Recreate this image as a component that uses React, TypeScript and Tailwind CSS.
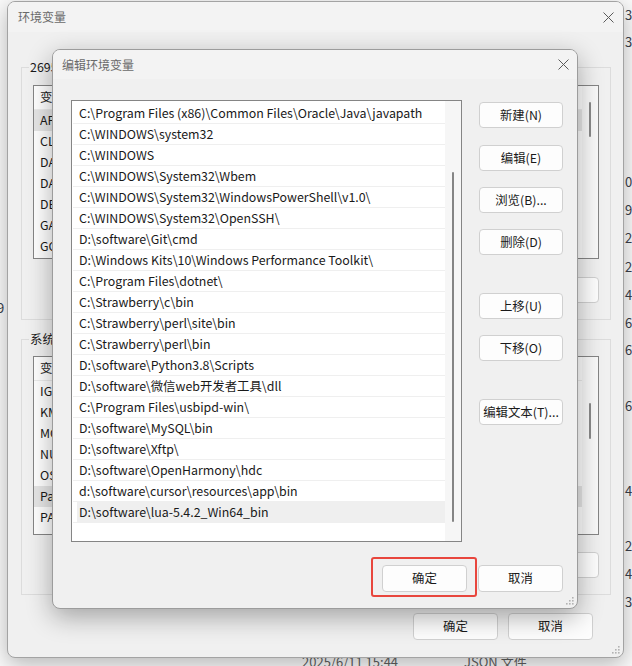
import React from "react";

const FONT = "font-['Noto_Sans_CJK_SC',sans-serif]";

const pathRows = [
  "C:\\Program Files (x86)\\Common Files\\Oracle\\Java\\javapath",
  "C:\\WINDOWS\\system32",
  "C:\\WINDOWS",
  "C:\\WINDOWS\\System32\\Wbem",
  "C:\\WINDOWS\\System32\\WindowsPowerShell\\v1.0\\",
  "C:\\WINDOWS\\System32\\OpenSSH\\",
  "D:\\software\\Git\\cmd",
  "D:\\Windows Kits\\10\\Windows Performance Toolkit\\",
  "C:\\Program Files\\dotnet\\",
  "C:\\Strawberry\\c\\bin",
  "C:\\Strawberry\\perl\\site\\bin",
  "C:\\Strawberry\\perl\\bin",
  "D:\\software\\Python3.8\\Scripts",
  "D:\\software\\微信web开发者工具\\dll",
  "C:\\Program Files\\usbipd-win\\",
  "D:\\software\\MySQL\\bin",
  "D:\\software\\Xftp\\",
  "D:\\software\\OpenHarmony\\hdc",
  "d:\\software\\cursor\\resources\\app\\bin",
  "D:\\software\\lua-5.4.2_Win64_bin",
];

const userVars = ["API_KEY", "CLASSPATH", "DASHSCOPE_API_KEY", "DATA_HOME", "DEEPSEEK_KEY", "GATEWAY", "GOPATH"];
const sysVars = ["IGCCSVC_DB", "KMP_DUPLICATE_LIB_OK", "MOZ_PLUGIN_PATH", "NUMBER_OF_PROCESSORS", "OS", "Path", "PATHEXT"];

// size column of the explorer window sitting behind everything
const sizeFragments: [number, string][] = [
  [6, "3,"], [33, "3,"], [173, "0,"], [201, "9,"], [229, "2,"], [258, "2,"], [286, "4,"],
  [314, "6,"], [341, "6,"], [397, "6,"], [482, "4,"], [537, "2,"], [565, "4,"], [593, "3,"],
];

function CloseIcon() {
  return (
    <svg width="11" height="11" viewBox="0 0 11 11" className="text-[#5a5a5a]">
      <path d="M0.5 0.5L10.5 10.5M10.5 0.5L0.5 10.5" stroke="currentColor" strokeWidth="1" />
    </svg>
  );
}

function Grip() {
  const dots = [[7, 1], [7, 4], [4, 4], [7, 7], [4, 7], [1, 7]];
  return (
    <svg width="10" height="10" viewBox="0 0 10 10" className="absolute right-[2px] bottom-[2px]">
      {dots.map(([x, y]) => (
        <rect key={`${x}-${y}`} x={x} y={y} width="1.6" height="1.6" fill="#b3b3b3" />
      ))}
    </svg>
  );
}

function Btn({ label, className = "" }: { label: string; className?: string }) {
  return (
    <button
      className={`flex h-[26px] w-[84px] items-center justify-center rounded-[4px] border border-[#d0d0d0] bg-[#fdfdfd] text-[12.4px] leading-none text-[#1a1a1a] ${className}`}
    >
      {label}
    </button>
  );
}

function VarList({
  rows,
  selected,
  className,
  thumbClass,
}: {
  rows: string[];
  selected: number;
  className: string;
  thumbClass: string;
}) {
  return (
    <div className={`flex border border-[#858585] bg-white ${className}`}>
      <div className="flex-1 overflow-hidden">
        <div className="flex h-[24px] items-center border-b border-[#ececec] pl-[6px] text-[12.4px] text-[#1a1a1a]">
          变量
        </div>
        {rows.map((r, i) => (
          <div
            key={r}
            className={`flex h-[21px] items-center pl-[6px] text-[12.4px] text-[#1a1a1a] ${
              i === selected ? "bg-[#e6e6e6]" : ""
            }`}
          >
            {r}
          </div>
        ))}
      </div>
      <div className="flex w-[16px] justify-center bg-[#f9f9f9]">
        <div className={`w-[2px] rounded-full bg-[#8a8a8a] ${thumbClass}`} />
      </div>
    </div>
  );
}

function Group({ legend, children, className = "" }: { legend: string; children: React.ReactNode; className?: string }) {
  return (
    <div className={`relative border border-[#dcdcdc] px-[11px] ${className}`}>
      <span className="absolute left-[7px] top-[-10px] bg-[#f0f0f0] px-[1px] text-[12.4px] leading-[18px] text-[#1a1a1a]">
        {legend}
      </span>
      {children}
    </div>
  );
}

function OuterWindow() {
  return (
    <div className="absolute left-[7px] top-[1px] flex h-[657px] w-[617px] flex-col overflow-hidden rounded-[8px] border border-[#a3a3a3] bg-[#f0f0f0] shadow-[0_6px_22px_rgba(0,0,0,0.28)]">
      <div className="flex h-[30px] items-center justify-between bg-[#f3f3f3] pl-[10px] pr-[9px]">
        <span className="text-[12px] text-[#6a6a6a]">环境变量</span>
        <CloseIcon />
      </div>
      <div className="flex flex-1 flex-col pl-[13px] pr-[12px]">
        <Group legend="26958的用户变量(U)" className="mt-[35px] pt-[17px] pb-[16px]">
          <VarList rows={userVars} selected={0} className="h-[174px]" thumbClass="mt-[16px] h-[35px]" />
          <div className="mt-[18px] flex justify-end gap-[10px]">
            <Btn label="新建(N)..." />
            <Btn label="编辑(E)..." />
            <Btn label="删除(D)" />
          </div>
        </Group>
        <Group legend="系统变量(S)" className="mt-[19px] pt-[16px] pb-[16px]">
          <VarList rows={sysVars} selected={5} className="h-[179px]" thumbClass="mt-[46px] h-[36px]" />
          <div className="mt-[17px] flex justify-end gap-[10px]">
            <Btn label="新建(W)..." />
            <Btn label="编辑(I)..." />
            <Btn label="删除(L)" />
          </div>
        </Group>
        <div className="mt-[18px] flex justify-end gap-[10px] pr-[18px]">
          <Btn label="确定" className="h-[27px] w-[85px]" />
          <Btn label="取消" className="h-[27px] w-[85px]" />
        </div>
      </div>
      <Grip />
    </div>
  );
}

function EditDialog() {
  return (
    <div className="absolute left-[52px] top-[49px] flex h-[560px] w-[526px] flex-col overflow-hidden rounded-[8px] border border-[#9c9c9c] bg-[#f0f0f0] shadow-[0_8px_26px_rgba(0,0,0,0.32)]">
      <div className="flex h-[29px] items-center justify-between bg-[#f3f3f3] pl-[9px] pr-[8px]">
        <span className="text-[12px] text-[#6a6a6a]">编辑环境变量</span>
        <CloseIcon />
      </div>
      <div className="flex pl-[18px] pr-[14px] pt-[21px]">
        <div className="flex h-[442px] w-[391px] border border-[#858585] bg-white">
          <div className="flex-1 pl-[1px] pt-[2px]">
            {pathRows.map((r, i) => (
              <div
                key={r}
                className={`flex h-[21px] items-center border-b border-[#efefef] pl-[6px] text-[12.4px] text-[#1a1a1a] ${
                  i === pathRows.length - 1 ? "bg-[#efefef] shadow-[inset_4px_0_0_#ffffff]" : ""
                }`}
              >
                {r}
              </div>
            ))}
          </div>
          <div className="flex w-[16px] justify-center bg-[#f6f6f6]">
            <div className="mt-[71px] h-[350px] w-[2px] rounded-full bg-[#858585]" />
          </div>
        </div>
        <div className="ml-[17px] flex flex-col pt-[2px]">
          <Btn label="新建(N)" />
          <Btn label="编辑(E)" className="mt-[17px]" />
          <Btn label="浏览(B)..." className="mt-[16px]" />
          <Btn label="删除(D)" className="mt-[16px]" />
          <Btn label="上移(U)" className="mt-[38px]" />
          <Btn label="下移(O)" className="mt-[16px]" />
          <Btn label="编辑文本(T)..." className="mt-[38px]" />
        </div>
      </div>
      <div className="mt-[23px] flex justify-end gap-[11px] pr-[14px]">
        <div className="relative">
          <Btn label="确定" className="h-[27px] w-[85px]" />
          <div className="absolute -left-[11px] -right-[10px] -top-[8px] -bottom-[5px] rounded-[3px] border-2 border-[#e8463d]" />
        </div>
        <Btn label="取消" className="h-[27px] w-[85px]" />
      </div>
      <Grip />
    </div>
  );
}

export default function App() {
  return (
    <div className={`relative h-[666px] w-[632px] overflow-hidden bg-[#fafafa] ${FONT}`}>
      {sizeFragments.map(([top, t]) => (
        <div key={top} className="absolute left-[625px] text-[13px] leading-[18px] text-[#3a3f4a]" style={{ top }}>
          {t}
        </div>
      ))}
      <div className="absolute left-[-3px] top-[299px] text-[13px] leading-[18px] text-[#3a3f4a]">9</div>
      <div className="absolute left-[302px] top-[653px] text-[13px] leading-[18px] text-[#5f5f5f]">2025/6/11 15:44</div>
      <div className="absolute left-[464px] top-[653px] text-[13px] leading-[18px] text-[#5f5f5f]">JSON 文件</div>
      <OuterWindow />
      <EditDialog />
    </div>
  );
}
